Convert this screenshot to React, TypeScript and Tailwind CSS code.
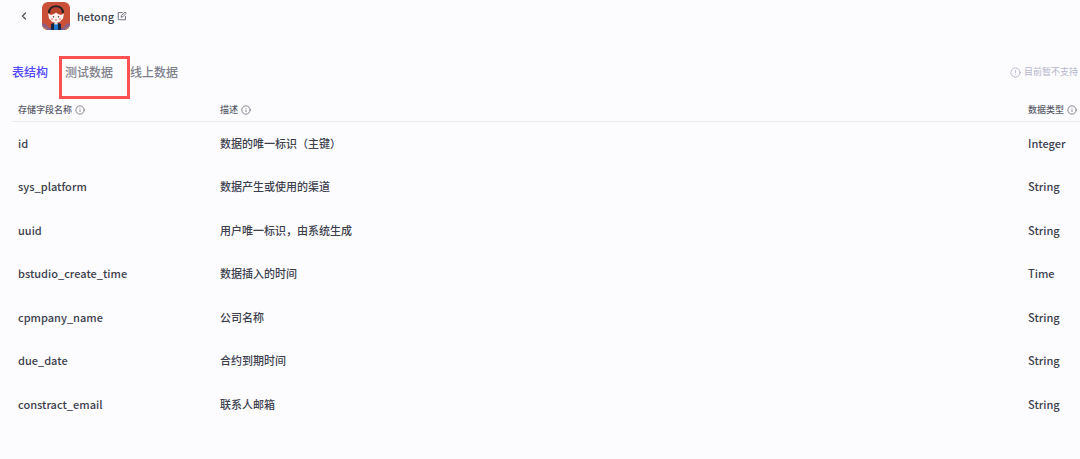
import { useState } from 'react';
import { ChevronLeft, CircleAlert, Info } from 'lucide-react';
import clsx from 'clsx';

const tabs = ['表结构', '测试数据', '线上数据'];

const fields = [
  { name: 'id', desc: '数据的唯一标识（主键）', type: 'Integer' },
  { name: 'sys_platform', desc: '数据产生或使用的渠道', type: 'String' },
  { name: 'uuid', desc: '用户唯一标识，由系统生成', type: 'String' },
  { name: 'bstudio_create_time', desc: '数据插入的时间', type: 'Time' },
  { name: 'cpmpany_name', desc: '公司名称', type: 'String' },
  { name: 'due_date', desc: '合约到期时间', type: 'String' },
  { name: 'constract_email', desc: '联系人邮箱', type: 'String' },
];

function Avatar() {
  return (
    <svg viewBox="0 0 28 28" className="size-7 rounded-md" aria-hidden="true">
      <rect width="28" height="28" fill="#cb5038" />
      <path d="M0 21q5 1 9 7H0zM28 21q-5 1-9 7h9z" fill="#8a6088" />
      <path d="M0 25l5 3M28 25l-5 3" stroke="#d98554" strokeWidth="1.5" />
      <path d="M8 28l2-6q4-1 8 0l2 6z" fill="#1e78cc" />
      <path d="M9 22l3-1v7H9zM19 22l-3-1v7h3z" fill="#1b2440" />
      <path d="M12.5 19h3v3.5h-3z" fill="#f3d9d4" />
      <path d="M7 12Q8 5 14 5t7 7z" fill="#b9452f" />
      <path
        d="M6 11.5l3 1.5 3-1 2-1.5 2 1.5 3 1 3-1.5-1 5-1.5 1.5Q18 20.500 14 20.500T8.500 18L7 16.500z"
        fill="#fcf1ee"
      />
      <path d="M7 11C7 2 21 2 21 11" fill="none" stroke="#2d2228" strokeWidth="2.200" />
      <circle cx="11.500" cy="14.800" r=".7" fill="#4a3038" />
      <circle cx="16.500" cy="14.800" r=".7" fill="#4a3038" />
      <circle cx="10" cy="17" r="1.200" fill="#f6b0b4" />
      <circle cx="18" cy="17" r="1.200" fill="#f6b0b4" />
      <path d="M13.200 18h1.600" stroke="#d2404a" strokeWidth="1" />
    </svg>
  );
}

function EditIcon() {
  return (
    <svg
      viewBox="0 0 16 16"
      className="size-[10px]"
      fill="none"
      stroke="currentColor"
      strokeWidth="1.6"
      aria-hidden="true"
    >
      <path d="M9 2.500H2V14h11.500V8" />
      <path d="M6.500 10l.5-2.500L13 1.500l2 2-6 6z" />
    </svg>
  );
}

function HeadCell({ label, className }: { label: string; className?: string }) {
  return (
    <th scope="col" className={clsx('p-0 pl-1.5 text-left font-medium', className)}>
      <span className="flex items-center gap-[3px] whitespace-nowrap">
        {label}
        <Info className="size-[10px] shrink-0 text-[#70717f]" strokeWidth={2} />
      </span>
    </th>
  );
}

export default function App() {
  const [active, setActive] = useState(tabs[0]);

  return (
    <div className="min-h-screen overflow-hidden bg-[#fcfcff] pb-8 font-['Noto_Sans_CJK_SC',sans-serif] text-[#3d3f4d]">
      <header className="flex h-8 items-center pl-[18px]">
        <button type="button" aria-label="返回" className="mr-3 text-[#4c4e5c]">
          <ChevronLeft className="size-3" strokeWidth={2.5} />
        </button>
        <Avatar />
        <h1 className="ml-[7px] text-[11px] leading-4 font-medium">hetong</h1>
        <button type="button" aria-label="编辑" className="ml-[3px] text-[#70717f]">
          <EditIcon />
        </button>
      </header>

      <div className="mt-7 flex h-6 items-center justify-between pr-0.5 pl-3">
        <div role="tablist" className="flex gap-[17px] text-[12px] leading-6 font-medium">
          {tabs.map((tab) => (
            <button
              key={tab}
              type="button"
              role="tab"
              aria-selected={active === tab}
              onClick={() => setActive(tab)}
              className={clsx('relative', active === tab ? 'text-[#5147ff]' : 'text-[#80818c]')}
            >
              {tab}
              {tab === '测试数据' && (
                <span className="pointer-events-none absolute -top-1 -right-[17px] -left-1.5 h-[43px] border-3 border-[#fc5252]" />
              )}
            </button>
          ))}
        </div>
        <p className="flex items-center gap-[3px] text-[9px] leading-4 text-[#b4b5cb]">
          <CircleAlert className="size-[11px]" />
          目前暂不支持
        </p>
      </div>

      <div className="mt-4 pl-3">
        <table className="w-full table-fixed border-collapse">
          <thead className="text-[9px] leading-4 text-[#5b5c6a]">
            <tr className="h-[21px] border-b border-[#ebebf1]">
              <HeadCell label="存储字段名称" className="w-[202px]" />
              <HeadCell label="描述" />
              <HeadCell label="数据类型" className="w-[58px]" />
            </tr>
          </thead>
          <tbody className="text-[11px] leading-4 font-medium">
            {fields.map((field) => (
              <tr key={field.name} className="h-[43px] even:h-11">
                <td className="p-0 pl-1.5">{field.name}</td>
                <td className="p-0 pl-1.5">{field.desc}</td>
                <td className="p-0 pl-1.5">{field.type}</td>
              </tr>
            ))}
          </tbody>
        </table>
      </div>
    </div>
  );
}
